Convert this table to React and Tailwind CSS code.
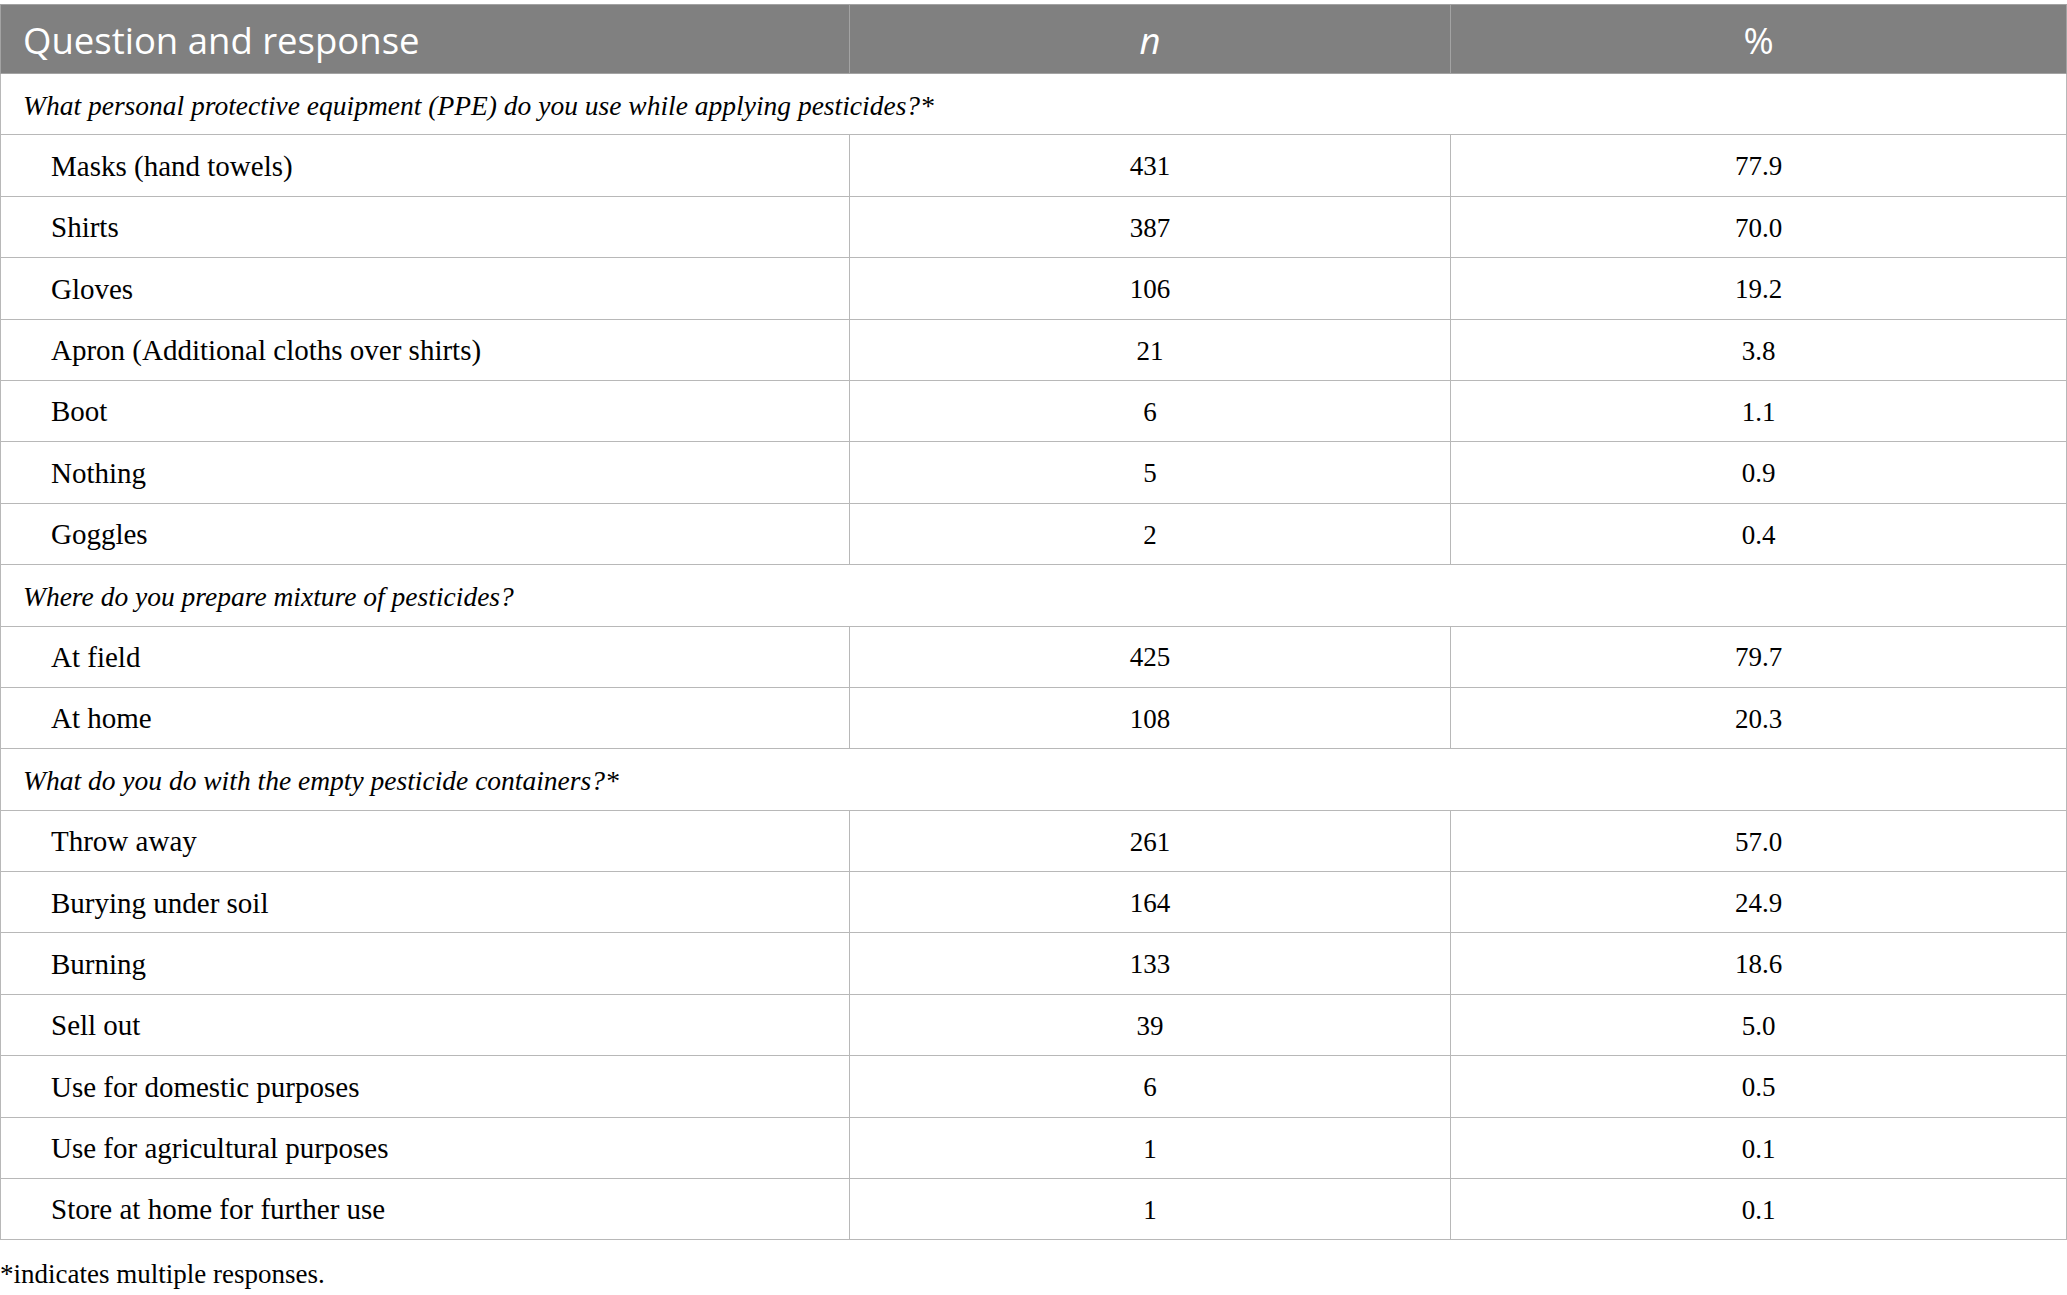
import React from 'react';

const sections = [
  {
    question: 'What personal protective equipment (PPE) do you use while applying pesticides?*',
    rows: [
      ['Masks (hand towels)', '431', '77.9'],
      ['Shirts', '387', '70.0'],
      ['Gloves', '106', '19.2'],
      ['Apron (Additional cloths over shirts)', '21', '3.8'],
      ['Boot', '6', '1.1'],
      ['Nothing', '5', '0.9'],
      ['Goggles', '2', '0.4'],
    ],
  },
  {
    question: 'Where do you prepare mixture of pesticides?',
    rows: [
      ['At field', '425', '79.7'],
      ['At home', '108', '20.3'],
    ],
  },
  {
    question: 'What do you do with the empty pesticide containers?*',
    rows: [
      ['Throw away', '261', '57.0'],
      ['Burying under soil', '164', '24.9'],
      ['Burning', '133', '18.6'],
      ['Sell out', '39', '5.0'],
      ['Use for domestic purposes', '6', '0.5'],
      ['Use for agricultural purposes', '1', '0.1'],
      ['Store at home for further use', '1', '0.1'],
    ],
  },
];

const App = () => {
  return (
    <div className="w-[2067px] h-[1295px] bg-white pt-[4px] pr-[1px] text-black">
      <table className="w-[2066px] border-collapse table-fixed">
        <colgroup>
          <col className="w-[849px]" />
          <col className="w-[601px]" />
          <col className="w-[616px]" />
        </colgroup>
        <thead>
          {/* Header */}
          <tr className="h-[69px] bg-[#808080] text-white text-[36.5px] font-['Open_Sans',sans-serif]">
            <th className="border border-[#a3a3a3] text-left font-normal pl-[22px] pt-[2px]">Question and response</th>
            <th className="border border-[#a3a3a3] font-normal italic pt-[2px]">n</th>
            <th className="border border-[#a3a3a3] font-normal pt-[2px]">%</th>
          </tr>
        </thead>
        <tbody className="font-['Liberation_Serif',serif]">
          {sections.map((section, i) => (
            <React.Fragment key={i}>
              <tr className="h-[61.4px]">
                <td colSpan={3} className="border border-[#b8b8b8] italic text-[27.5px] pl-[22px] pt-[2px]">
                  {section.question}
                </td>
              </tr>
              {section.rows.map((row, j) => (
                <tr key={j} className="h-[61.4px]">
                  <td className="border border-[#b8b8b8] text-[29px] pl-[50px] pt-[2px]">{row[0]}</td>
                  <td className="border border-[#b8b8b8] text-[27px] text-center pt-[2px]">{row[1]}</td>
                  <td className="border border-[#b8b8b8] text-[27px] text-center pt-[2px]">{row[2]}</td>
                </tr>
              ))}
            </React.Fragment>
          ))}
        </tbody>
      </table>
      <p className="mt-[14px] font-['Liberation_Serif',serif] text-[27px]">*indicates multiple responses.</p>
    </div>
  );
};

export default App;
